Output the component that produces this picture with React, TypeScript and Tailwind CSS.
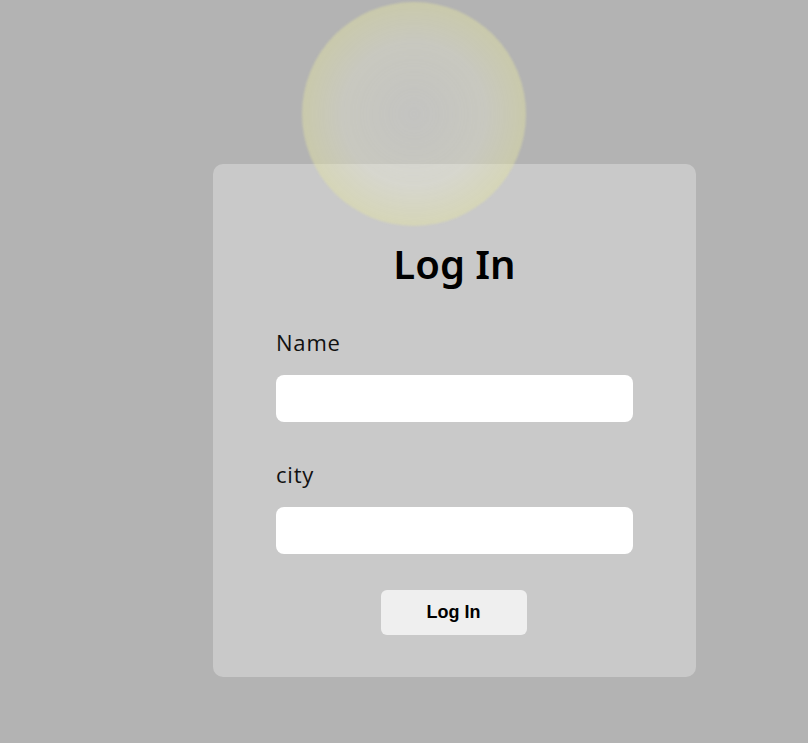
export default function App() {
  return (
    <div className="relative min-h-[743px] w-full overflow-hidden bg-[#b3b3b3]">
      <div className="ml-[213px] pt-[164px]">
        <div className="flex w-[483px] flex-col items-center rounded-[10px] bg-[#c9c9c9] px-[63px] pb-[42px] pt-[76px]">
          <h1 className="font-['Noto_Sans',sans-serif] text-[40px] font-semibold leading-[48px] text-black">
            Log In
          </h1>
          <form className="mt-[39px] flex w-full flex-col" onSubmit={(e) => e.preventDefault()}>
            <label className="font-['Open_Sans',sans-serif] text-[22px] leading-[30px] tracking-[0.8px] text-[#111]">
              Name
            </label>
            <input type="text" className="mt-[18px] h-[47px] w-full rounded-[8px] bg-white px-3 outline-none" />
            <label className="mt-[37px] font-['Open_Sans',sans-serif] text-[22px] leading-[30px] tracking-[0.8px] text-[#111]">
              city
            </label>
            <input type="text" className="mt-[18px] h-[47px] w-full rounded-[8px] bg-white px-3 outline-none" />
            <button
              type="submit"
              className="mx-auto mt-[36px] h-[45px] w-[146px] -translate-x-px rounded-[6px] bg-[#efefef] font-['Liberation_Sans',sans-serif] text-[18px] font-bold text-black"
            >
              Log In
            </button>
          </form>
        </div>
      </div>
      {/* glowing orb */}
      <div className="pointer-events-none absolute left-[302px] top-[2px] h-[224px] w-[224px] rounded-full bg-[radial-gradient(circle,rgba(245,245,235,0.25)_0%,rgba(240,240,215,0.35)_45%,rgba(225,225,150,0.5)_80%,rgba(205,205,110,0.55)_100%)] blur-[1px]" />
    </div>
  );
}
